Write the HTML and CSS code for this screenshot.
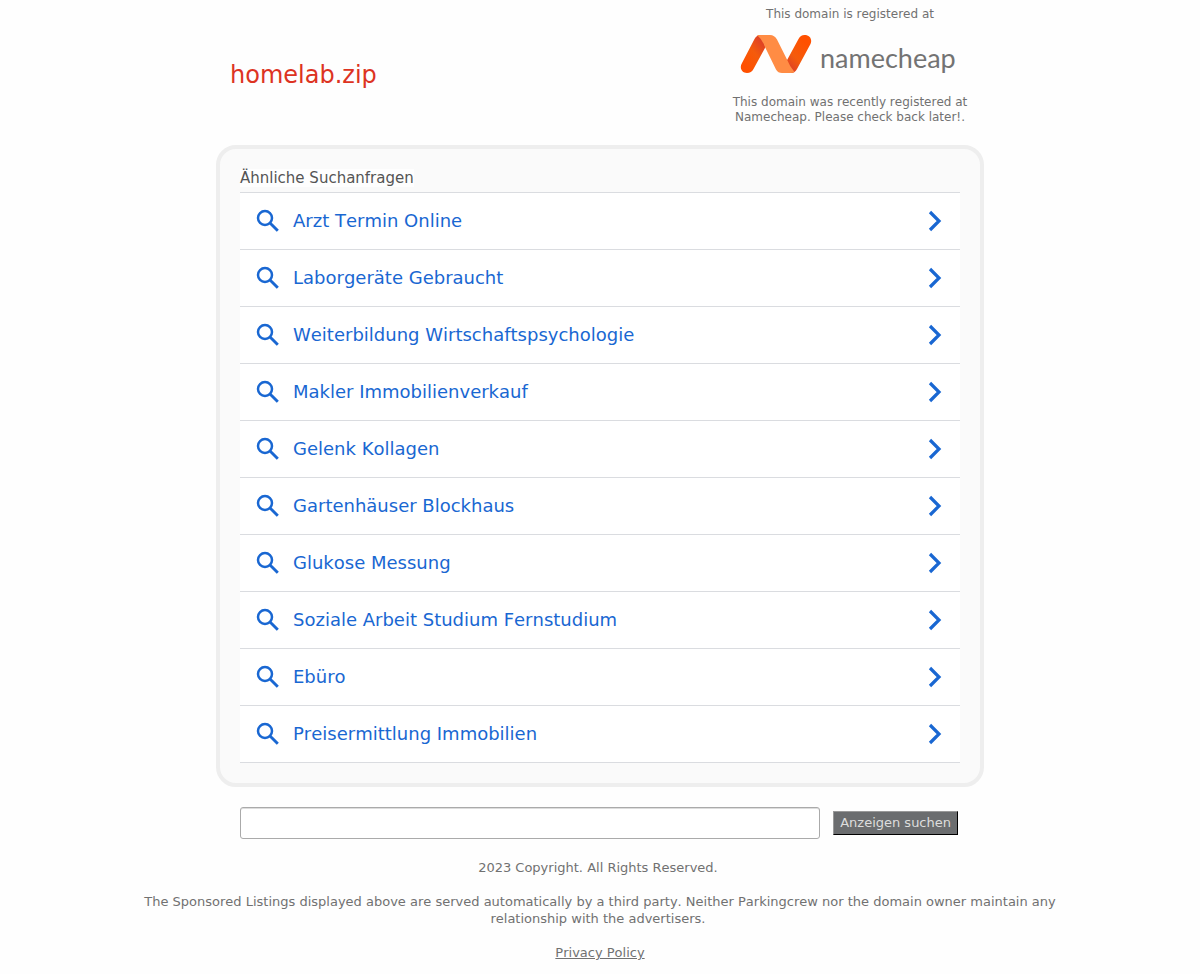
FILE: index.html
```
<!DOCTYPE html>
<html lang="de">
<head>
<meta charset="utf-8">
<meta name="viewport" content="width=device-width, initial-scale=1">
<title>homelab.zip</title>
<link rel="stylesheet" href="styles.css">
</head>
<body>
<svg class="defs" aria-hidden="true">
  <symbol id="search" viewBox="0 0 24 24"><circle cx="9" cy="9" r="7" fill="none" stroke="currentColor" stroke-width="2.500"/><path d="M14 14l7.800 7.800" fill="none" stroke="currentColor" stroke-width="2.900"/></symbol>
  <symbol id="chevron" viewBox="0 0 14 22"><path d="M2 2l9 9-9 9" fill="none" stroke="currentColor" stroke-width="3.200"/></symbol>
</svg>
<div class="page">
  <header class="header">
    <h1 class="domain">homelab.zip</h1>
    <div class="registrar">
      <p class="note">This domain is registered at</p>
      <a class="logo" href="#">
        <svg class="mark" viewBox="0 1 72 40" aria-hidden="true">
          <defs>
            <linearGradient id="left" x1="0" y1="1" x2="0.800" y2="0"><stop offset="0.200" stop-color="#ff5000"/><stop offset="0.600" stop-color="#f45b0c"/><stop offset="1" stop-color="#d93c2b"/></linearGradient>
            <linearGradient id="right" x1="0.900" y1="0" x2="0.200" y2="1"><stop offset="0.200" stop-color="#ff5000"/><stop offset="0.650" stop-color="#f45b0c"/><stop offset="1" stop-color="#d93c2b"/></linearGradient>
          </defs>
          <path d="M25.500 13L13.500 35Q11.500 39 7 39C2 39 -0.500 34.500 1.500 30L14.500 5Q16.500 1 21 1Z" fill="url(#left)"/>
          <path d="M46 28L58.500 5Q60.500 1 64.500 1C70 1 72.500 5.500 70.500 10L57 35Q55 39 51 39Z" fill="url(#right)"/>
          <path d="M17 1H30Q34.500 1 37 5.500L47 25.500Q50 33 54.500 38Q53.500 39 51 39H42Q38 39 36 35.500L25 13Q22 5 17 1Z" fill="#ff8c44"/>
        </svg>
        <span class="wordmark">namecheap</span>
      </a>
      <p class="note">This domain was recently registered at Namecheap. Please check back later!.</p>
    </div>
  </header>
  <main>
    <section class="panel">
      <h2 class="heading"><span class="heading-text">Ähnliche Suchanfragen</span></h2>
      <nav class="list">
        <a class="item" href="#"><svg class="search"><use href="#search"/></svg><span class="label">Arzt Termin Online</span><svg class="chevron"><use href="#chevron"/></svg></a>
        <a class="item" href="#"><svg class="search"><use href="#search"/></svg><span class="label">Laborgeräte Gebraucht</span><svg class="chevron"><use href="#chevron"/></svg></a>
        <a class="item" href="#"><svg class="search"><use href="#search"/></svg><span class="label">Weiterbildung Wirtschaftspsychologie</span><svg class="chevron"><use href="#chevron"/></svg></a>
        <a class="item" href="#"><svg class="search"><use href="#search"/></svg><span class="label">Makler Immobilienverkauf</span><svg class="chevron"><use href="#chevron"/></svg></a>
        <a class="item" href="#"><svg class="search"><use href="#search"/></svg><span class="label">Gelenk Kollagen</span><svg class="chevron"><use href="#chevron"/></svg></a>
        <a class="item" href="#"><svg class="search"><use href="#search"/></svg><span class="label">Gartenhäuser Blockhaus</span><svg class="chevron"><use href="#chevron"/></svg></a>
        <a class="item" href="#"><svg class="search"><use href="#search"/></svg><span class="label">Glukose Messung</span><svg class="chevron"><use href="#chevron"/></svg></a>
        <a class="item" href="#"><svg class="search"><use href="#search"/></svg><span class="label">Soziale Arbeit Studium Fernstudium</span><svg class="chevron"><use href="#chevron"/></svg></a>
        <a class="item" href="#"><svg class="search"><use href="#search"/></svg><span class="label">Ebüro</span><svg class="chevron"><use href="#chevron"/></svg></a>
        <a class="item" href="#"><svg class="search"><use href="#search"/></svg><span class="label">Preisermittlung Immobilien</span><svg class="chevron"><use href="#chevron"/></svg></a>
      </nav>
    </section>
    <form class="form">
      <input class="query" type="text" name="q" aria-label="Suche">
      <button class="submit" type="submit">Anzeigen suchen</button>
    </form>
  </main>
</div>
<footer class="footer">
  <p>2023 Copyright. All Rights Reserved.&nbsp;</p>
  <p>The Sponsored Listings displayed above are served automatically by a third party. Neither Parkingcrew nor the domain owner maintain any relationship with the advertisers.&nbsp;</p>
  <p><a class="policy" href="#">Privacy Policy</a></p>
</footer>
</body>
</html>
```
FILE: styles.css
```
* { box-sizing: border-box; }

body {
  margin: 0;
  background: #fefefe;
  color: #717171;
  font-family: "DejaVu Sans", Verdana, sans-serif;
  font-kerning: none;
}

h1, h2, p { margin: 0; font-weight: 400; }

.defs { display: block; width: 0; height: 0; }

.page { max-width: 768px; margin: 0 auto; }

.header {
  display: flex;
  justify-content: space-between;
  align-items: center;
  padding: 7px 4px 20px 14px;
}

.domain {
  margin-top: 18px;
  color: #dd3322;
  font-size: 24px;
  line-height: 30px;
}

.registrar { width: 260px; text-align: center; }

.note { padding: 0 10px; font-size: 12px; line-height: 15px; }

.logo {
  display: flex;
  align-items: center;
  gap: 8px;
  height: 66px;
  margin-bottom: 7px;
  padding-left: 20px;
  color: #737373;
  text-decoration: none;
}

.mark { width: 72px; height: 40px; }

.wordmark {
  padding-top: 6px;
  font-family: Lato, sans-serif;
  font-size: 27px;
  line-height: 36px;
}

.panel {
  padding: 20px;
  border: 4px solid #eee;
  border-radius: 20px;
  background: #fafafa;
}

.heading {
  padding-bottom: 5px;
  color: #555;
  font-size: 15px;
  line-height: 18px;
}

.heading-text { background: #fefefe; }

.list { border-top: 1px solid #dadce0; }

.item {
  display: flex;
  align-items: center;
  gap: 13px;
  height: 57px;
  padding: 0 18px 0 16px;
  border-bottom: 1px solid #dadce0;
  background: #fff;
  color: #1967d2;
  font-size: 18px;
  line-height: 22px;
  text-decoration: none;
}

.label { flex: 1; }

.search { width: 24px; height: 24px; }

.chevron { width: 14px; height: 22px; }

.form {
  display: flex;
  align-items: center;
  gap: 13px;
  padding: 20px 26px 20px 24px;
}

.query {
  flex: 1;
  min-width: 0;
  height: 32px;
  border: 1px solid #aaa;
  border-radius: 3px;
  background: #fff;
  box-shadow: inset 0 1px 0 #ddd;
  font: inherit;
}

.submit {
  height: 24px;
  padding: 0 6px 1px;
  border: 1px solid;
  border-color: #999 #000 #000 #999;
  background: #6b6d6f;
  color: #ddd;
  font-family: inherit;
  font-size: 13px;
}

.footer {
  display: grid;
  gap: 17px;
  max-width: 960px;
  margin: 0 auto;
  padding: 0 20px;
  font-size: 13px;
  line-height: 17px;
  text-align: center;
}

.policy { color: inherit; }
```
